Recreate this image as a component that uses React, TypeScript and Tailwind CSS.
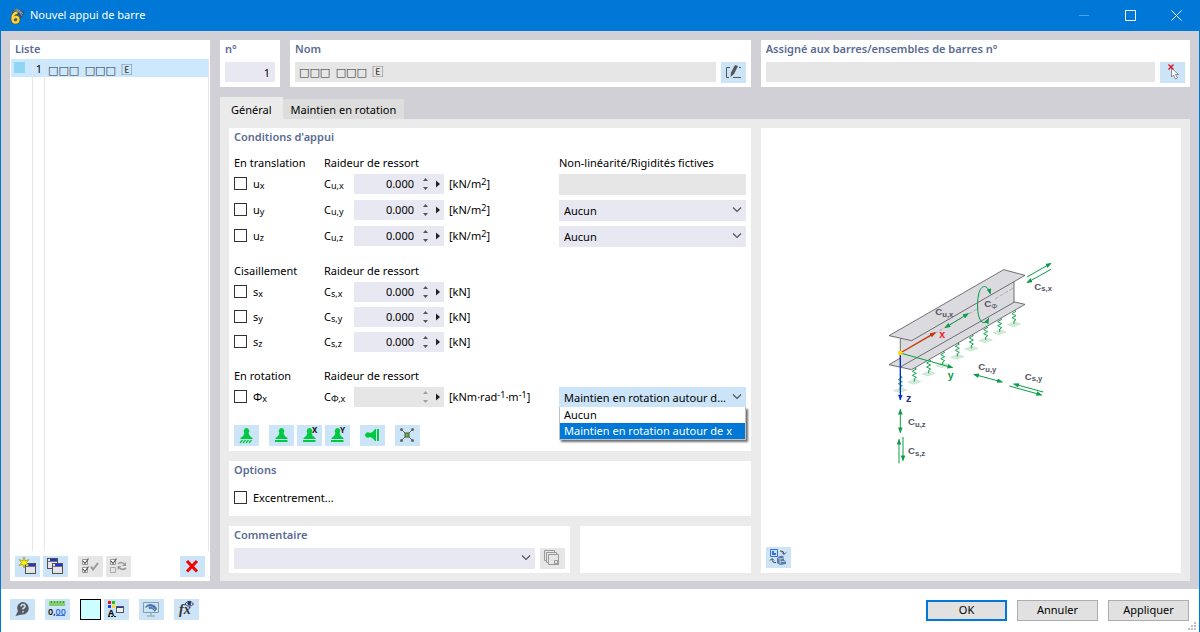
import React, { useState } from 'react';

const TABS = ['Général', 'Maintien en rotation'];

// Groups are separated by an en space
const NAME = '□□□\u2002□□□\u2002🄴';

const ROTATION_OPTIONS = ['Aucun', 'Maintien en rotation autour de x'];

const GROUPS = [
  {
    title: 'En translation',
    rowHeight: 'h-[21px]',
    rows: [
      { id: 'ux', dof: 'u', axis: 'x', spring: 'u,x', unit: 'area', nonlinearity: 'disabled' },
      { id: 'uy', dof: 'u', axis: 'y', spring: 'u,y', unit: 'area', nonlinearity: 'select' },
      { id: 'uz', dof: 'u', axis: 'z', spring: 'u,z', unit: 'area', nonlinearity: 'select' },
    ],
  },
  {
    title: 'Cisaillement',
    rowHeight: 'h-5',
    rows: [
      { id: 'sx', dof: 's', axis: 'x', spring: 's,x', unit: 'force', nonlinearity: 'none' },
      { id: 'sy', dof: 's', axis: 'y', spring: 's,y', unit: 'force', nonlinearity: 'none' },
      { id: 'sz', dof: 's', axis: 'z', spring: 's,z', unit: 'force', nonlinearity: 'none' },
    ],
  },
  {
    title: 'En rotation',
    rowHeight: 'h-5',
    rows: [
      { id: 'phix', dof: 'Φ', axis: 'x', spring: 'Φ,x', unit: 'moment', nonlinearity: 'open' },
    ],
  },
];

function Icon({ children }: { children: React.ReactNode }) {
  return (
    <svg width="25" height="21" viewBox="0 0 25 21" fill="none" aria-hidden="true">
      {children}
    </svg>
  );
}

function ToolButton({ label, disabled, children }: { label: string; disabled?: boolean; children: React.ReactNode }) {
  return (
    <button
      type="button"
      aria-label={label}
      disabled={disabled}
      className="h-[21px] w-[25px] shrink-0 bg-[#cce4f7] hover:bg-[#b5d9f5] disabled:bg-[#e6e6e6]"
    >
      <Icon>{children}</Icon>
    </button>
  );
}

function Card({ title, className = '', children }: { title: string; className?: string; children?: React.ReactNode }) {
  return (
    <section className={`bg-white px-[5px] ${className}`}>
      <h2 className="h-[18px] truncate font-semibold leading-[18px] text-[#5a6b94]">{title}</h2>
      {children}
    </section>
  );
}

function CheckBox({ id }: { id: string }) {
  return (
    <input
      id={id}
      type="checkbox"
      className="mt-[3px] size-[13px] shrink-0 appearance-none border border-[#333] bg-white checked:bg-[#0078d7]"
    />
  );
}

function Chevron() {
  return (
    <svg width="10" height="6" viewBox="0 0 10 6" fill="none" stroke="#555" strokeWidth="1.2" className="pointer-events-none absolute top-[7px] right-1">
      <path d="M1 .5 5 4.5 9 .5" />
    </svg>
  );
}

function Select({ label, options }: { label: string; options: string[] }) {
  return (
    <div className="relative min-w-0 flex-1">
      <select aria-label={label} className="block h-[21px] w-full appearance-none bg-[#e8e8f2] px-[5px] outline-none">
        {options.map((option) => (
          <option key={option}>{option}</option>
        ))}
      </select>
      <Chevron />
    </div>
  );
}

function RotationSelect() {
  const [open, setOpen] = useState(true);
  const [selected, setSelected] = useState(1);

  return (
    <div className="relative">
      <button
        type="button"
        aria-haspopup="listbox"
        aria-expanded={open}
        onClick={() => setOpen(!open)}
        className="block h-5 w-full truncate bg-[#cce4f7] pr-[18px] pl-[5px] text-left leading-[22px]"
      >
        {ROTATION_OPTIONS[selected]}
      </button>
      <Chevron />
      {open && (
        <ul role="listbox" className="absolute top-5 right-0 left-0 z-10 border border-t-0 border-[#c0c0c0] bg-white shadow-[2px_2px_2px_#707070]">
          {ROTATION_OPTIONS.map((option, idx) => (
            <li
              key={option}
              role="option"
              aria-selected={idx === selected}
              onClick={() => {
                setSelected(idx);
                setOpen(false);
              }}
              className={`h-4 px-1 leading-4 whitespace-nowrap ${idx === selected ? 'bg-[#0078d7] text-white' : ''}`}
            >
              {option}
            </li>
          ))}
        </ul>
      )}
    </div>
  );
}

function SpringInput({ label, disabled }: { label: string; disabled?: boolean }) {
  return (
    <div className={`flex h-5 items-center ${disabled ? 'bg-[#e6e6e6]' : 'bg-[#e8e8f2]'}`}>
      <input
        aria-label={label}
        disabled={disabled}
        defaultValue={disabled ? '' : '0.000'}
        className="h-5 w-[60px] bg-transparent text-right outline-none"
      />
      <svg width="30" height="20" viewBox="0 0 30 20" aria-hidden="true">
        <path d="M9 7 11.5 4 14 7zM9 13 11.5 16 14 13z" fill={disabled ? '#a0a0a0' : '#555'} />
        <path d="M22 6.500 26 10 22 13.500z" fill="#222" />
      </svg>
    </div>
  );
}

function Sub({ children }: { children: React.ReactNode }) {
  return <sub className="-bottom-[1px] text-[9px]">{children}</sub>;
}

function Sup({ children }: { children: React.ReactNode }) {
  return <sup className="-top-[3px] text-[9px]">{children}</sup>;
}

function Unit({ kind }: { kind: string }) {
  if (kind === 'area') return <>[kN/m<Sup>2</Sup>]</>;
  if (kind === 'force') return <>[kN]</>;
  return <>[kNm·rad<Sup>-1</Sup>·m<Sup>-1</Sup>]</>;
}

function TitleBar() {
  return (
    <header className="flex h-[31px] items-center bg-[#0078d7] pl-2 text-white">
      <svg width="16" height="18" viewBox="0 0 16 18" fill="none" className="mr-[5px]" aria-hidden="true">
        <path d="M3 4Q8-1 15.500 5.500L12 12Q10 6 4 7z" fill="#34506f" />
        <path d="M5 3Q10 2 13 9M7 2Q12 3 14 7M4 5Q9 3 13 6" stroke="#a9bccd" strokeWidth=".7" />
        <path d="M8.500 5.500Q3.500 6 3.500 12Q3.500 15.500 6.500 15.500Q9.500 15.500 9.500 12.500Q9.500 10 7 10Q4.500 10 3.800 12" stroke="#5a4a10" strokeWidth="3.400" />
        <path d="M8.500 5.500Q3.500 6 3.500 12Q3.500 15.500 6.500 15.500Q9.500 15.500 9.500 12.500Q9.500 10 7 10Q4.500 10 3.800 12" stroke="#ffd23c" strokeWidth="2.400" />
      </svg>
      <h1 className="flex-1">Nouvel appui de barre</h1>
      <button type="button" aria-label="Réduire" className="flex h-full w-[46px] items-center justify-center">
        <svg width="10" height="10" viewBox="0 0 10 10" stroke="#4da1e3"><path d="M0 4.500H10" /></svg>
      </button>
      <button type="button" aria-label="Agrandir" className="flex h-full w-[46px] items-center justify-center">
        <svg width="11" height="11" viewBox="0 0 11 11" fill="none" stroke="#fff"><path d="M.5.5H10.500V10.500H.5z" /></svg>
      </button>
      <button type="button" aria-label="Fermer" className="flex h-full w-[46px] items-center justify-center">
        <svg width="11" height="11" viewBox="0 0 11 11" stroke="#fff"><path d="M.5.5 10.500 10.500M10.500.5.5 10.500" /></svg>
      </button>
    </header>
  );
}

function WindowGlyph({ x, y }: { x: number; y: number }) {
  return (
    <g transform={`translate(${x} ${y})`}>
      <rect x=".5" y=".5" width="10" height="10" fill="#e4e4ea" stroke="#505050" />
      <path d="M1 3.500H10" stroke="#707070" />
      <rect x="3" y="1" width="7" height="2" fill="#2430d8" />
    </g>
  );
}

function ListPanel() {
  return (
    <aside className="flex w-[200px] shrink-0 flex-col bg-white pb-1">
      <h2 className="h-[19px] px-[5px] font-semibold leading-[18px] text-[#5a6b94]">Liste</h2>
      <div className="mx-[1px] flex flex-1 flex-col">
        <button type="button" className="flex h-[18px] w-full items-stretch border-r border-[#e6e6e6] bg-[#cce8ff] text-left leading-5">
          <span className="w-[22px] border-r border-[#e6e6e6] p-[3px]">
            <span className="block size-[11px] bg-[#8fd6f5]" />
          </span>
          <span className="w-3 border-r border-[#e6e6e6] pr-[2px] text-right">1</span>
          <span className="pl-[3px] font-['DejaVu_Sans','Noto_Sans_CJK_JP',sans-serif] leading-[23px] text-[#333]">{NAME}</span>
        </button>
        <div className="flex flex-1 border-r border-[#e6e6e6]">
          <span className="w-[22px] border-r border-[#e6e6e6]" />
          <span className="w-3 border-r border-[#e6e6e6]" />
        </div>
      </div>
      <div className="mt-[5px] flex gap-[3px] px-[5px]">
        <ToolButton label="Nouveau">
          <WindowGlyph x={10} y={7} />
          <path d="M9 1 10 5 14 3.500 11.500 6.500 14 9.500 10 8.500 9 12 8 8.500 4 9.500 6.500 6.500 4 3.500 8 5z" fill="#fff200" stroke="#8a8420" strokeWidth=".6" />
        </ToolButton>
        <ToolButton label="Copier">
          <WindowGlyph x={4} y={2} />
          <WindowGlyph x={9} y={7} />
        </ToolButton>
        <span className="w-1" />
        <ToolButton label="Tout sélectionner" disabled>
          <path d="M4.500 3.500H9.500V8.500H4.500zM4.500 11.500H9.500V16.500H4.500z" fill="#fff" stroke="#999" />
          <path d="M5 5 7 7.500 10.500 2.500M5 13 7 15.500 10.500 10.500" stroke="#555" strokeWidth="1.200" />
          <path d="M13 10.500 15 13.500 20 7" stroke="#999" strokeWidth="2" />
        </ToolButton>
        <ToolButton label="Inverser la sélection" disabled>
          <path d="M4.500 3.500H9.500V8.500H4.500z" fill="#fff" stroke="#999" />
          <path d="M4.500 11.500H9.500V16.500H4.500z" stroke="#aaa" />
          <path d="M5 5 7 7.500 10.500 2.500" stroke="#555" strokeWidth="1.200" />
          <path d="M12 8Q15 5 18 8M20 12Q16 15 13 11.500" stroke="#999" strokeWidth="1.600" />
          <path d="M20 6V10H16zM11.500 14V10H15.500z" fill="#999" />
        </ToolButton>
        <span className="flex-1" />
        <ToolButton label="Supprimer">
          <path d="M7 5 17 15.500M17 5 7 15.500" stroke="#f50000" strokeWidth="3" />
        </ToolButton>
      </div>
    </aside>
  );
}

const SUPPORT_BODY = 'M12.500 3A3 3 0 0 1 14.500 8Q15 11 18.500 13V14H6.500V13Q10 11 10.500 8A3 3 0 0 1 12.500 3z';

function SupportPresets() {
  return (
    <div className="mt-[18px] flex">
      <ToolButton label="Encastrement">
        <path d={SUPPORT_BODY} fill="#00c840" />
        <path d="M6 18 8.500 15M9 18 11.500 15M12 18 14.500 15M15 18 17.500 15" stroke="#00c840" strokeWidth="1.300" />
      </ToolButton>
      <div className="ml-[10px] flex gap-[3px]">
        <ToolButton label="Appui simple">
          <path d={SUPPORT_BODY} fill="#00c840" />
          <path d="M6 15H18.500V17H6z" fill="#00c840" />
        </ToolButton>
        <ToolButton label="Appui en x">
          <path d={SUPPORT_BODY} fill="#00c840" />
          <path d="M6 15H18.500V17H6z" fill="#00c840" />
          <text x="15" y="8" fontSize="8" fontWeight="700" fill="#111">X</text>
        </ToolButton>
        <ToolButton label="Appui en y">
          <path d={SUPPORT_BODY} fill="#00c840" />
          <path d="M6 15H18.500V17H6z" fill="#00c840" />
          <text x="15" y="8" fontSize="8" fontWeight="700" fill="#111">Y</text>
        </ToolButton>
      </div>
      <div className="ml-[10px] flex gap-[10px]">
        <ToolButton label="Appui latéral">
          <path d="M5 10A3 3 0 0 1 10 8Q13 7.500 15 4H16V16H15Q13 12.500 10 12A3 3 0 0 1 5 10zM17 4H19V16H17z" fill="#00c840" />
        </ToolButton>
        <ToolButton label="Libre">
          <path d="M6.500 4.500 17.500 15.500M17.500 4.500 6.500 15.500" stroke="#666" />
          <g fill="#666">
            <circle cx="6.500" cy="4.500" r="1.500" />
            <circle cx="17.500" cy="4.500" r="1.500" />
            <circle cx="6.500" cy="15.500" r="1.500" />
            <circle cx="17.500" cy="15.500" r="1.500" />
          </g>
          <rect x="10" y="8" width="4" height="4" fill="#5fb820" stroke="#555" />
        </ToolButton>
      </div>
    </div>
  );
}

function Conditions() {
  return (
    <Card title="Conditions d'appui" className="pb-[5px]">
      <div className="mt-2 flex flex-col gap-[15px]">
        {GROUPS.map((group) => (
          <div key={group.title} className="flex flex-col gap-[5px]">
            <div className="-mb-[3px] grid h-[18px] grid-cols-[90px_235px_minmax(0,1fr)] leading-[18px]">
              <h3>{group.title}</h3>
              <span>Raideur de ressort</span>
              {group.rows[0].unit === 'area' && (
                <span className="whitespace-nowrap">Non-linéarité/Rigidités fictives</span>
              )}
            </div>
            {group.rows.map((row) => (
              <div key={row.id} className={`grid grid-cols-[90px_30px_90px_115px_minmax(0,1fr)] items-start leading-5 ${group.rowHeight}`}>
                <div className="flex h-5 items-start gap-[6px]">
                  <CheckBox id={row.id} />
                  <label htmlFor={row.id}>{row.dof}<Sub>{row.axis}</Sub></label>
                </div>
                <span>C<Sub>{row.spring}</Sub></span>
                <SpringInput label={`C ${row.spring}`} disabled={row.unit === 'moment'} />
                <span className="pl-[5px] whitespace-nowrap"><Unit kind={row.unit} /></span>
                {row.nonlinearity === 'disabled' && <div className="h-[21px] bg-[#e6e6e6]" />}
                {row.nonlinearity === 'select' && <Select label={`Non-linéarité ${row.spring}`} options={['Aucun']} />}
                {row.nonlinearity === 'open' && <RotationSelect />}
              </div>
            ))}
          </div>
        ))}
      </div>
      <SupportPresets />
    </Card>
  );
}

// Foundation springs below the bottom flange, from the near end to the far end
const SPRINGS = [
  [88, 367], [130, 342], [173, 317], [215, 292], [259, 267], [301, 242], [344, 217], [386, 193], [429, 169],
];

function BeamDiagram() {
  return (
    <svg width="200" height="220" viewBox="0 0 600 660" fill="none" role="img" aria-label="Appui de barre" className="font-['Liberation_Sans',Arial,sans-serif]">
      <defs>
        <marker id="tip" viewBox="0 0 10 8" refX="9" refY="4" markerWidth="18" markerHeight="14" markerUnits="userSpaceOnUse" orient="auto-start-reverse">
          <path d="M0 0 10 4 0 8z" fill="#0a9c46" />
        </marker>
        <marker id="tip-red" viewBox="0 0 10 8" refX="9" refY="4" markerWidth="18" markerHeight="14" markerUnits="userSpaceOnUse" orient="auto">
          <path d="M0 0 10 4 0 8z" fill="#cc3300" />
        </marker>
        <marker id="tip-blue" viewBox="0 0 10 8" refX="9" refY="4" markerWidth="18" markerHeight="14" markerUnits="userSpaceOnUse" orient="auto">
          <path d="M0 0 10 4 0 8z" fill="#0033cc" />
        </marker>
      </defs>

      {SPRINGS.map(([x, y]) => (
        <g key={x} transform={`translate(${x} ${y})`}>
          <path d="M-20 58 2 49 20 56-2 64z" fill="#d3ecd9" stroke="#b4dcc0" strokeWidth="1.500" />
          <path d="M0 8V14L6 18-6 25 6 31-6 37 6 43 0 47V56" stroke="#0a9c46" strokeWidth="2.800" />
        </g>
      ))}

      <g fill="#dadadf" stroke="#55555f" strokeWidth="2.500" strokeLinejoin="round">
        <path d="M54 347 392 150 462 166 122 362z" />
        <path d="M88 270 429 84V160L88 354z" />
        <path d="M54 260 398 62 462 79 122 275z" />
      </g>
      <path d="M190 254 325 176M372 150 428 116" stroke="#999" strokeWidth="2" strokeDasharray="12 5" />

      <g stroke="#0a9c46" strokeWidth="3">
        <path d="M88 312 245 356" markerEnd="url(#tip)" />
        <path d="M222 236 292 194" markerStart="url(#tip)" markerEnd="url(#tip)" />
        <path d="M358 135C350 105 330 105 323 135C316 170 320 210 333 219C342 224 348 218 353 208" markerStart="url(#tip)" markerEnd="url(#tip)" />
        <path d="M468 84 540 43" markerEnd="url(#tip)" />
        <path d="M540 61 468 101" markerEnd="url(#tip)" />
        <path d="M308 376 394 399" markerStart="url(#tip)" markerEnd="url(#tip)" />
        <path d="M517 429 428 405" markerEnd="url(#tip)" />
        <path d="M415 411 512 438" markerEnd="url(#tip)" />
        <path d="M88 481V551" markerStart="url(#tip)" markerEnd="url(#tip)" />
        <path d="M84 643V571" markerEnd="url(#tip)" />
        <path d="M96 564V635" markerEnd="url(#tip)" />
      </g>
      <path d="M88 312 193 251" stroke="#cc3300" strokeWidth="4" markerEnd="url(#tip-red)" />
      <path d="M88 312V453" stroke="#0033cc" strokeWidth="4" markerEnd="url(#tip-blue)" />
      <circle cx="88" cy="312" r="7" fill="#ffd800" />

      <g fontSize="32" fontWeight="700">
        <text x="205" y="266" fill="#ee1c25">x</text>
        <text x="230" y="389" fill="#0a9c46">y</text>
        <text x="105" y="458" fill="#28288c">z</text>
      </g>
      <g fontSize="29" fontWeight="600" fill="#55555f">
        <text x="193" y="199">C<tspan dy="5" fontSize="23">u,x</tspan></text>
        <text x="340" y="175">C<tspan dy="5" fontSize="23" fontWeight="400">Φ</tspan></text>
        <text x="490" y="122">C<tspan dy="5" fontSize="23">s,x</tspan></text>
        <text x="322" y="364">C<tspan dy="5" fontSize="23">u,y</tspan></text>
        <text x="461" y="392">C<tspan dy="5" fontSize="23">s,y</tspan></text>
        <text x="111" y="528">C<tspan dy="5" fontSize="23">u,z</tspan></text>
        <text x="111" y="615">C<tspan dy="5" fontSize="23">s,z</tspan></text>
      </g>
    </svg>
  );
}

function Footer() {
  return (
    <footer className="relative flex items-start justify-between pt-[10px] pr-[10px] pb-[11px] pl-[9px]">
      <div className="flex items-center gap-[10px]">
        <ToolButton label="Aide">
          <path d="M13 3A6 6 0 1 1 12 15.500L5.500 17 8 12A6 6 0 0 1 13 3z" fill="#555b60" />
          <path d="M11 7.500Q11 5.500 13 5.500T15 7.500Q15 8.500 13 9.500V10.500M13 12V13.500" stroke="#cce4f7" strokeWidth="1.500" />
        </ToolButton>
        <ToolButton label="Unités">
          <rect x="4" y="2" width="16" height="5" fill="#82cf6b" />
          <path d="M6.500 2V4M9.500 2V4M12.500 2V4M15.500 2V4M18.500 2V4" stroke="#4d9a3a" />
          <text x="3" y="15.500" fontSize="9" fontWeight="600" fill="#111">0,</text>
          <text x="10.500" y="15.500" fontSize="9" fontWeight="600" fill="#3b6fd8">00</text>
          <path d="M11 16.500H20" stroke="#3b6fd8" />
        </ToolButton>
        <div className="flex gap-[3px]">
          <button type="button" aria-label="Couleur" className="size-[21px] border border-black bg-[#ccffff]" />
          <ToolButton label="Affichage">
            <path d="M4 2H7V5H4z" fill="#f01010" />
            <path d="M8 2H11V5H8z" fill="#20c020" />
            <path d="M4 6H7V9H4z" fill="#2040e0" />
            <path d="M8 6H11V9H8z" fill="#ffe000" />
            <text x="4" y="16.500" fontSize="9" fontWeight="700" fill="#111">A</text>
            <path d="M4 17.500H12" stroke="#111" strokeDasharray="2 1" />
            <rect x="12.500" y="7.500" width="7" height="6" fill="#eee" stroke="#555" />
            <path d="M13 8.500H19" stroke="#2430d8" />
          </ToolButton>
        </div>
        <ToolButton label="Vue">
          <path d="M4.500 3.500H19.500V13.500H4.500zM12 14V16.500M8 17H16" stroke="#8b98a3" />
          <path d="M6 9Q7 5 12 5Q17 6 18 10L15.500 13Q14 9 10 10L9.500 7.500z" fill="#4777a8" />
          <path d="M8 8Q13 6 16 11" stroke="#9fc3e4" strokeWidth=".7" />
        </ToolButton>
        <ToolButton label="Formules">
          <text x="5" y="15" fontSize="14" fontStyle="italic" fontWeight="700" fill="#333" className="font-['Liberation_Serif',serif]">fx</text>
          <path d="M11 5Q15-.5 19.500 5Q15 9.500 11 5z" fill="#fff" stroke="#26304f" />
          <circle cx="15.300" cy="4.500" r="2" fill="#26357a" />
        </ToolButton>
      </div>
      <div className="flex gap-[10px] pt-[1px]">
        <button type="button" className="h-[21px] w-[81px] border-2 border-[#0078d7] bg-[#e1e1e1]">OK</button>
        <button type="button" className="h-[21px] w-[81px] border border-[#adadad] bg-[#e1e1e1]">Annuler</button>
        <button type="button" className="h-[21px] w-[81px] border border-[#adadad] bg-[#e1e1e1]">Appliquer</button>
      </div>
      <svg width="8" height="8" viewBox="0 0 8 8" fill="#bfbfbf" className="absolute right-[3px] bottom-[2px]" aria-hidden="true">
        <path d="M6 0H8V2H6zM3 3H5V5H3zM6 3H8V5H6zM0 6H2V8H0zM3 6H5V8H3zM6 6H8V8H6z" />
      </svg>
    </footer>
  );
}

export default function App() {
  const [activeTab, setActiveTab] = useState(0);

  return (
    <div className="flex min-h-screen flex-col border-x border-b border-[#0078d7] bg-white font-['Noto_Sans','Open_Sans',sans-serif] text-[11px] text-black">
      <TitleBar />

      <main className="flex flex-1 gap-[10px] bg-[#d1d0d6] px-[9px] pt-[9px] pb-2">
        <ListPanel />

        <div className="flex min-w-0 flex-1 flex-col">
          {/* Identification */}
          <div className="flex h-[47px] gap-[10px]">
            <Card title="n°" className="w-[60px] shrink-0">
              <input aria-label="n°" defaultValue="1" className="mt-1 block h-5 w-full bg-[#e8e8f2] px-[5px] text-right outline-none" />
            </Card>
            <Card title="Nom" className="min-w-0 flex-[461]">
              <div className="mt-1 flex gap-[5px]">
                <input
                  aria-label="Nom"
                  readOnly
                  value={NAME}
                  className="h-5 min-w-0 flex-1 bg-[#e6e6e6] px-1 pb-[2px] font-['DejaVu_Sans','Noto_Sans_CJK_JP',sans-serif] text-[#333] outline-none"
                />
                <ToolButton label="Modifier le nom">
                  <path d="M9 5.500H5.500V15.500H8M12 15.500H20M18 5.500H20" stroke="#555" />
                  <path d="M14 3 17 4 13 12 9.500 15 10 10.500z" fill="#555" />
                </ToolButton>
              </div>
            </Card>
            <Card title="Assigné aux barres/ensembles de barres n°" className="min-w-0 flex-[429]">
              <div className="mt-1 flex gap-[5px]">
                <input aria-label="Assigné aux barres" readOnly className="h-5 min-w-0 flex-1 bg-[#e6e6e6] px-[5px] outline-none" />
                <ToolButton label="Sélectionner les barres">
                  <path d="M11.500 6V15L13.500 13 15.500 17 17.500 16 15.500 12.500H18.500z" fill="#fff" stroke="#777" strokeWidth=".8" />
                  <path d="M8.500 2.500 13.500 7.500M13.500 2.500 8.500 7.500" stroke="#e01020" strokeWidth="1.400" />
                </ToolButton>
              </div>
            </Card>
          </div>

          {/* Tabs */}
          <div role="tablist" className="mt-[10px] flex h-[22px] items-end">
            {TABS.map((tab, idx) => (
              <button
                key={tab}
                type="button"
                role="tab"
                aria-selected={idx === activeTab}
                onClick={() => setActiveTab(idx)}
                className={idx === activeTab ? 'h-[22px] bg-[#ebebeb] px-[11px] pt-1' : 'h-5 bg-[#dddddd] px-2 pt-[2px]'}
              >
                {tab}
              </button>
            ))}
          </div>

          {/* Tab content */}
          <div className="grid flex-1 grid-cols-[minmax(0,522fr)_minmax(0,420fr)] gap-[10px] bg-[#ebebeb] px-[9px] pt-[9px] pb-2">
            <div className="flex flex-col gap-[10px]">
              <Conditions />
              <Card title="Options" className="h-[55px]">
                <div className="mt-[9px] flex items-start gap-[6px] leading-5">
                  <CheckBox id="eccentricity" />
                  <label htmlFor="eccentricity">Excentrement...</label>
                </div>
              </Card>
              <div className="grid flex-1 grid-cols-[341fr_171fr] gap-[10px]">
                <Card title="Commentaire" className="pb-1">
                  <div className="mt-1 flex gap-[5px]">
                    <Select label="Commentaire" options={['']} />
                    <ToolButton label="Commentaires" disabled>
                      <path d="M6 12.500H4.500V2.500H14.500V4M8 14.500H6.500V4.500H16.500V6" stroke="#999" />
                      <path d="M8.500 6.500H18.500V16.500H8.500z" stroke="#999" />
                      <path d="M14.500 12.500H17.500V15.500H14.500z" stroke="#999" />
                    </ToolButton>
                  </div>
                </Card>
                <div className="bg-white" />
              </div>
            </div>

            <div className="flex flex-col bg-white p-[5px]">
              <div className="flex flex-1 items-center justify-center pt-[38px]">
                <BeamDiagram />
              </div>
              <ToolButton label="Changer de vue">
                <path d="M4.500 2.500H11.500V9.500H4.500z" fill="#cce4f7" stroke="#3b6fe0" />
                <path d="M6 4H8V6H10V8H6z" fill="#3b6fe0" />
                <path d="M14 4Q18 3.500 18 7M16 5.500 18 7.500 20 5.500M10 15.500Q6 16 6 12M4 13.500 6 11.500 8 13.500" stroke="#444" />
                <path d="M11 10 16 8.500 18 10V13L20 14V17L14 18 11 16z" fill="#5b7ba6" />
                <path d="M11 10 14 12V17M14 12 18 11M14 15 20 14" stroke="#cfe0f2" strokeWidth=".8" />
              </ToolButton>
            </div>
          </div>
        </div>
      </main>

      <Footer />
    </div>
  );
}
